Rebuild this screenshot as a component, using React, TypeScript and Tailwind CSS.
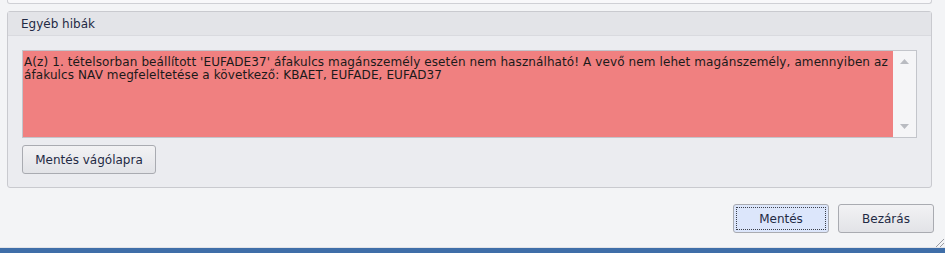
import React from 'react';

const font = { fontFamily: 'Tahoma, "DejaVu Sans", sans-serif' };

const WinButton: React.FC<{ label: string; width: string; focused?: boolean }> = ({ label, width, focused }) => (
  <div
    className={`${width} h-[29px] rounded-[3px] border border-[#a9abb1] p-[2px] ${
      focused ? 'bg-[#dce6fb]' : 'bg-gradient-to-b from-[#f2f2f4] to-[#e2e3e7]'
    }`}
  >
    <div
      className={`w-full h-full flex items-center justify-center text-[12px] text-[#1f2a44] ${
        focused ? 'border border-dotted border-[#3a3f4a]' : ''
      }`}
    >
      {label}
    </div>
  </div>
);

export default function App() {
  return (
    <div className="w-[945px] h-[253px] bg-[#f3f4f6] flex flex-col overflow-hidden" style={font}>
      {/* bottom edge of the panel above */}
      <div className="ml-[7px] w-[925px] h-[4px] bg-[#f8f8fa] border border-t-0 border-[#cfd0d5] rounded-b-[3px]" />

      {/* group box */}
      <div className="ml-[7px] mt-[7px] w-[925px] h-[177px] border border-[#c9cacf] rounded-[3px] bg-[#ebecf0] flex flex-col">
        <div className="h-[24px] bg-[#e3e4e8] border-b border-[#d9dadf] flex items-center pl-[13px] text-[12px] text-[#1f2a44]">
          Egyéb hibák
        </div>
        <div className="flex flex-col pl-[14px] pt-[14px]">
          <div className="w-[895px] h-[88px] border border-[#c3c5cb] flex">
            <div className="flex-1 bg-[#f08080] pl-[1px] pt-[5px] text-[12px] leading-[13px] tracking-[0.1px] text-[#1a1a1a]">
              A(z) 1. tételsorban beállított 'EUFADE37' áfakulcs magánszemély esetén nem használható! A vevő nem lehet
              magánszemély, amennyiben az áfakulcs NAV megfeleltetése a következő: KBAET, EUFADE, EUFAD37
            </div>
            <div className="w-[23px] bg-[#f5f5f7] flex flex-col items-center justify-between py-[8px]">
              <svg width="9" height="5" viewBox="0 0 9 5">
                <path d="M0 5 L4.5 0 L9 5 Z" fill="#b9bbc1" />
              </svg>
              <svg width="9" height="5" viewBox="0 0 9 5">
                <path d="M0 0 L4.5 5 L9 0 Z" fill="#b9bbc1" />
              </svg>
            </div>
          </div>
          <div className="mt-[7px]">
            <WinButton label="Mentés vágólapra" width="w-[134px]" />
          </div>
        </div>
      </div>

      {/* footer buttons */}
      <div className="flex justify-end gap-[9px] mt-[16px] mr-[11px]">
        <WinButton label="Mentés" width="w-[96px]" focused />
        <WinButton label="Bezárás" width="w-[96px]" />
      </div>

      <div className="mt-auto relative">
        <svg className="absolute right-[1px] bottom-[6px]" width="10" height="10" viewBox="0 0 10 10">
          <path d="M2 10 L10 2 M6 10 L10 6" stroke="#9a9ca3" strokeWidth="1" />
        </svg>
        <div className="h-[1px] bg-[#e2e3e7]" />
        <div className="h-[5px] bg-[#3f6ea8]" />
      </div>
    </div>
  );
}
